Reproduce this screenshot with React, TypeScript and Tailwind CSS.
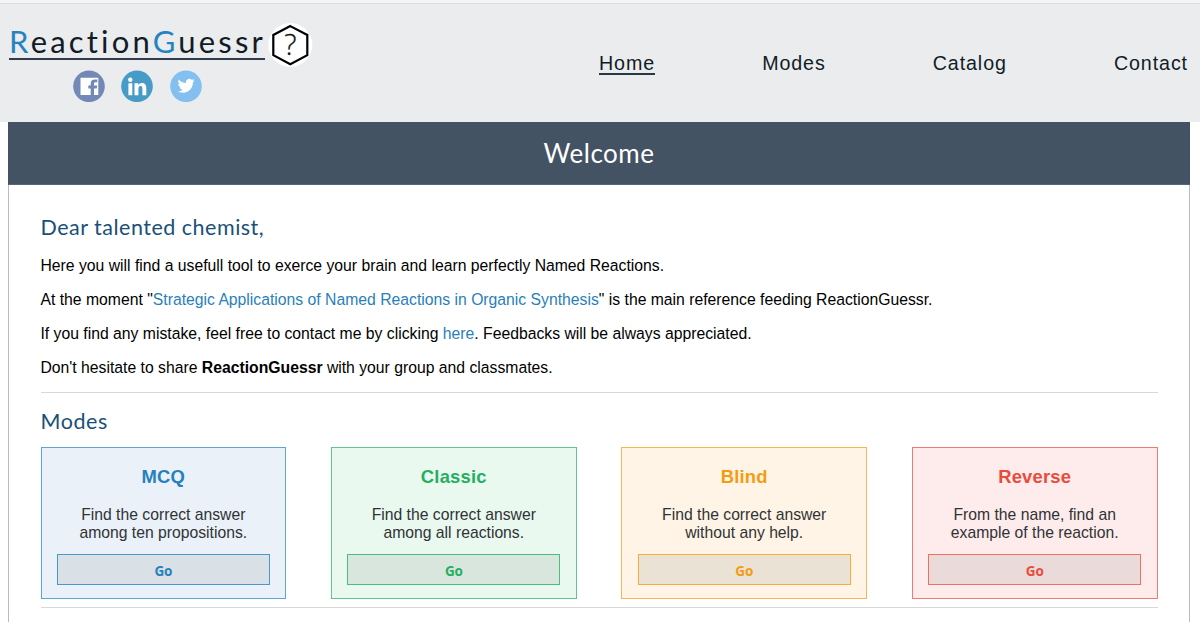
import type { ReactNode } from "react";

const modes = [
  {
    name: "MCQ",
    lines: ["Find the correct answer", "among ten propositions."],
    card: "border-[#5fa6d3] bg-[#eaf1f8]",
    title: "text-[#2580bd]",
    button: "border-[#4a98cb] bg-[#d9e0e6] text-[#2580bd]",
  },
  {
    name: "Classic",
    lines: ["Find the correct answer", "among all reactions."],
    card: "border-[#62c58d] bg-[#e9f9f0]",
    title: "text-[#27ae60]",
    button: "border-[#4bbd7c] bg-[#d9e6dd] text-[#27ae60]",
  },
  {
    name: "Blind",
    lines: ["Find the correct answer", "without any help."],
    card: "border-[#f6b655] bg-[#fff4e6]",
    title: "text-[#f39c12]",
    button: "border-[#f5ac3c] bg-[#ebe2d6] text-[#f39c12]",
  },
  {
    name: "Reverse",
    lines: ["From the name, find an", "example of the reaction."],
    card: "border-[#ee7b70] bg-[#feecec]",
    title: "text-[#e74c3c]",
    button: "border-[#ee7065] bg-[#eadada] text-[#e74c3c]",
  },
];

function Facebook() {
  return (
    <svg className="size-8" viewBox="0 0 32 32">
      <circle cx="16" cy="16.3" r="15.8" fill="#7288b6" />
      <path d="M7.5 7.8h17.8v17.3h-4.3v-6.5h2.7l.5-3H21v-1.7c0-1.1.5-1.6 1.6-1.6h1.7V9.5h-2.6c-2.7 0-4 1.6-4 4.1v2h-2.4v3h2.4v6.5H7.5z" fill="#fff" />
    </svg>
  );
}

function LinkedIn() {
  return (
    <svg className="size-8" viewBox="0 0 32 32">
      <circle cx="16" cy="16.3" r="15.8" fill="#479bc7" />
      <g fill="#fff">
        <circle cx="9.3" cy="9.8" r="2.2" />
        <path d="M7.4 13.3h3.9v12H7.4zM13.5 13.3h3.7v1.7c.8-1.3 2.1-2 3.7-2 3.2 0 4.4 2 4.4 5.3v7h-3.9v-6.3c0-1.8-.4-2.9-1.8-2.9-1.6 0-2.2 1.2-2.2 3v6.2h-3.9z" />
      </g>
    </svg>
  );
}

function Twitter() {
  return (
    <svg className="size-8" viewBox="0 0 32 32">
      <circle cx="16" cy="16.3" r="15.8" fill="#83c0f0" />
      <path transform="translate(7.6 7.2) scale(.71)" d="M23.95 4.57a10 10 0 0 1-2.82.77 4.96 4.96 0 0 0 2.16-2.72c-.95.55-2 .95-3.13 1.19a4.92 4.92 0 0 0-8.38 4.48C7.69 8.1 4.07 6.13 1.64 3.16a4.82 4.82 0 0 0-.67 2.48c0 1.71.87 3.21 2.19 4.1a4.9 4.9 0 0 1-2.23-.62v.06a4.92 4.92 0 0 0 3.95 4.83 5 5 0 0 1-2.21.08 4.94 4.94 0 0 0 4.6 3.42A9.87 9.87 0 0 1 0 19.54a13.99 13.99 0 0 0 7.55 2.21c9.05 0 14-7.5 14-13.98 0-.21 0-.42-.02-.63a9.94 9.94 0 0 0 2.46-2.55z" fill="#fff" />
    </svg>
  );
}

function Hexagon() {
  return (
    <svg className="ml-[3px] mt-[22px] h-[45px] w-[45px]" viewBox="0 0 45 45">
      <circle cx="22.3" cy="23" r="22" fill="#fff" />
      <path d="M22.3 4.1 39.3 13v20.2l-17 9.1-17-9.1V13z" fill="none" stroke="#000" strokeWidth="2.2" />
      <text x="22.3" y="33.2" textAnchor="middle" className="fill-[#111] stroke-[#111] stroke-[0.3px] font-['Open_Sans',sans-serif] text-[29px] font-light">
        ?
      </text>
    </svg>
  );
}

function Paragraph({ children }: { children: ReactNode }) {
  return <p className="h-[34px] whitespace-nowrap text-[15.74px] leading-[18px]">{children}</p>;
}

export default function App() {
  return (
    <div className="h-[622px] overflow-hidden bg-white font-['Liberation_Sans',sans-serif] text-base text-black">
      <header className="flex h-[122px] justify-between border-t-[3px] border-[#f3f4f4] bg-[#eaecee] text-[#111c26] shadow-[inset_0_1px_0_#dedfe0]">
        <div className="-mt-[3px] pl-[9px]">
          <div className="flex">
            <h1 className="mt-[23px] h-[37px] w-[256px] whitespace-nowrap border-b-2 border-[#313d4d] font-['Lato',sans-serif] text-[31px] leading-[37px] tracking-[3.2px]">
              <span className="text-[#2683bf]">R</span>eaction<span className="text-[#2683bf]">G</span>uessr
            </h1>
            <Hexagon />
          </div>
          <div className="ml-[63.6px] mt-[3px] flex gap-[16.5px]">
            <Facebook />
            <LinkedIn />
            <Twitter />
          </div>
        </div>
        <nav className="mt-[47px] flex h-[25px] w-[601px] justify-between pr-3 text-[19.66px] leading-[26px] tracking-[0.9px]">
          <a className="h-[25px] w-14 border-b-2 border-[#253a42]">Home</a>
          <a>Modes</a>
          <a>Catalog</a>
          <a>Contact</a>
        </nav>
      </header>
      <main className="ml-2 mr-[10px] h-[520px] border-x border-[#b5bcc3]">
        <h2 className="-mx-px h-[63px] border-b border-[#53677a] bg-[#435363] text-center font-['Lato',sans-serif] text-[26px] leading-[63px] tracking-[0.5px] text-white">
          Welcome
        </h2>
        <div className="pl-[31.5px] pr-[31.5px] pt-[27px]">
          <h3 className="h-[45.4px] font-['Lato',sans-serif] text-[21.5px] leading-[30px] tracking-[0.5px] text-[#1a5078]">
            Dear talented chemist,
          </h3>
          <Paragraph>Here you will find a usefull tool to exerce your brain and learn perfectly Named Reactions.</Paragraph>
          <Paragraph>
            At the moment "<a className="text-[#2980b9]">Strategic Applications of Named Reactions in Organic Synthesis</a>" is the main reference feeding ReactionGuessr.
          </Paragraph>
          <Paragraph>
            If you find any mistake, feel free to contact me by clicking <a className="text-[#2980b9]">here</a>. Feedbacks will be always appreciated.
          </Paragraph>
          <Paragraph>
            Don't hesitate to share <b>ReactionGuessr</b> with your group and classmates.
          </Paragraph>
          <section className="-mt-[1.4px] h-[216px] border-y border-[#d8d8d8] pt-[13px]">
            <h3 className="h-[40.6px] font-['Lato',sans-serif] text-[21.5px] leading-[30px] tracking-[0.55px] text-[#1a5078]">Modes</h3>
            <div className="flex justify-between">
              {modes.map((mode) => (
                <article key={mode.name} className={`h-[152.6px] w-[245.6px] border px-[15.5px] pt-[17.4px] text-center ${mode.card}`}>
                  <h4 className={`h-[41.1px] text-[18.4px] font-bold leading-[23px] tracking-[0.2px] ${mode.title}`}>{mode.name}</h4>
                  <p className="h-[47.9px] whitespace-nowrap text-[15.72px] leading-[18px] text-[#303335]">
                    {mode.lines[0]}
                    <br />
                    {mode.lines[1]}
                  </p>
                  <button className={`block h-[31px] w-full border font-['Open_Sans',sans-serif] text-[13.5px] font-bold leading-[32px] tracking-[-0.2px] ${mode.button}`}>
                    Go
                  </button>
                </article>
              ))}
            </div>
          </section>
        </div>
      </main>
    </div>
  );
}
